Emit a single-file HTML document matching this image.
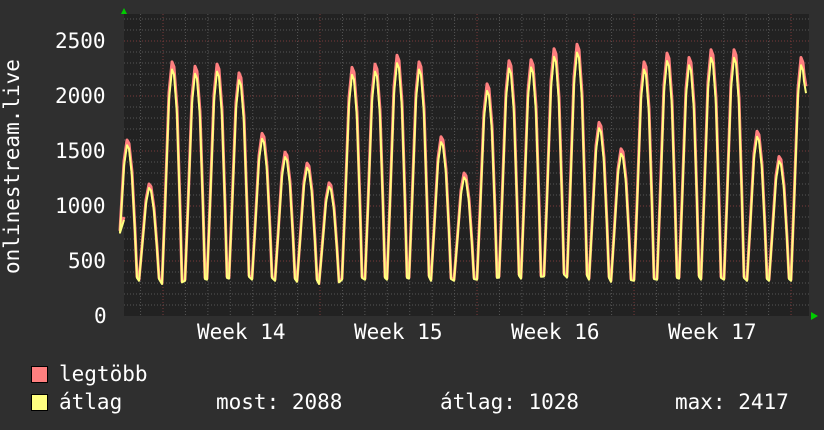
<!DOCTYPE html><html><head><meta charset="utf-8"><style>
body{margin:0;width:824px;height:430px;background:#2f2f2f;overflow:hidden;font-family:"DejaVu Sans Mono","Liberation Mono",monospace;color:#fff}
.t{position:absolute;font-size:21px;line-height:1;white-space:pre}
.sq{position:absolute;width:15px;height:15px;border:1px solid #000}
</style></head><body>
<svg width="824" height="430" style="position:absolute;left:0;top:0">
<rect x="124" y="14" width="685" height="302" fill="#222"/>
<g id="grid"></g>
<g id="data"></g>
<polygon points="121,14 124,8 127,14" fill="#0c0"/>
<polygon points="811,312 818,316 811,320" fill="#0c0"/>
</svg>
<div class="t" style="left:55px;top:31px">2500</div>
<div class="t" style="left:55px;top:86px">2000</div>
<div class="t" style="left:55px;top:141px">1500</div>
<div class="t" style="left:55px;top:196px">1000</div>
<div class="t" style="left:68px;top:251px">500</div>
<div class="t" style="left:94px;top:306px">0</div>
<div class="t" style="left:2px;top:274px;transform:rotate(-90deg);transform-origin:0 0">onlinestream.live</div>
<div class="t" style="left:197px;top:322px">Week 14</div>
<div class="t" style="left:354px;top:322px">Week 15</div>
<div class="t" style="left:511px;top:322px">Week 16</div>
<div class="t" style="left:668px;top:322px">Week 17</div>
<div class="sq" style="left:31px;top:366px;background:#ff7f7f"></div>
<div class="t" style="left:59px;top:364px">legtöbb</div>
<div class="sq" style="left:31px;top:394px;background:#ffff7f"></div>
<div class="t" style="left:59px;top:392px">átlag</div>
<div class="t" style="left:216px;top:392px">most: 2088</div>
<div class="t" style="left:440px;top:392px">átlag: 1028</div>
<div class="t" style="left:675px;top:392px">max: 2417</div>
<script>
var ns="http://www.w3.org/2000/svg";
function el(p,n,a){var e=document.createElementNS(ns,n);for(var k in a)e.setAttribute(k,a[k]);p.appendChild(e);return e;}
var g=document.getElementById('grid');
for(var v=100;v<=2700;v+=100){var y=316-v*0.11;if(y<14)break;var maj=v%500==0;
el(g,'line',{x1:124,x2:809,y1:y,y2:y,stroke:maj?'#7a3a3a':'#555','stroke-dasharray':'1,2'});}
for(var i=-2;i<=30;i++){var x=163+i*22.43;if(x<125||x>808)continue;var maj=(i%7==0);
el(g,'line',{x1:x,x2:x,y1:14,y2:316,stroke:maj?'#7a3a3a':'#555','stroke-dasharray':'1,2'});}
var pk=[[128,1600],[150,1200],[173,2310],[196,2270],[218,2290],[240,2210],[263,1660],[286,1490],[308,1390],[330,1210],[353,2260],[376,2290],[398,2370],[420,2310],[442,1630],[465,1300],[488,2110],[510,2320],[532,2330],[555,2430],[578,2470],[600,1760],[622,1520],[645,2310],[668,2390],[690,2350],[712,2420],[735,2420],[758,1680],[780,1450],[802,2350]];
var tr=[340,330,300,330,340,350,340,330,320,300,340,340,340,350,330,330,340,360,350,370,360,340,320,330,340,350,340,340,330,330,330];
function Y(v){return 316-v*0.11;}
function path(f){var d='M124,'+Y(900*f);
for(var i=0;i<pk.length;i++){var x=pk[i][0],p=pk[i][1]*f,t=tr[i]*f,last=i==pk.length-1;
if(i>0||x-11>124)d+=' L'+(x-11)+','+Y(t);
d+=' L'+(x-8)+','+Y(t+(p-t)*0.35)+' L'+(x-4)+','+Y(p*0.88)+' L'+(x-1)+','+Y(p)+' L'+(x+1)+','+Y(p*0.98);
if(last){d+=' L'+(x+2)+','+Y(2200*f)+' L'+(x+4)+','+Y(2088*f);}
else d+=' L'+(x+4)+','+Y(p*0.82)+' L'+(x+7)+','+Y(t+(p-t)*0.35)+' L'+(x+9)+','+Y(t*1.05);}
return d;}
var dg=document.getElementById('data');
el(dg,'path',{d:path(1.0),fill:'none',stroke:'#ff7f7f','stroke-width':3,'stroke-linejoin':'round'});
el(dg,'path',{d:path(0.97),fill:'none',stroke:'#ffff7f','stroke-width':2,'stroke-linejoin':'round'});
</script>
</body></html>
